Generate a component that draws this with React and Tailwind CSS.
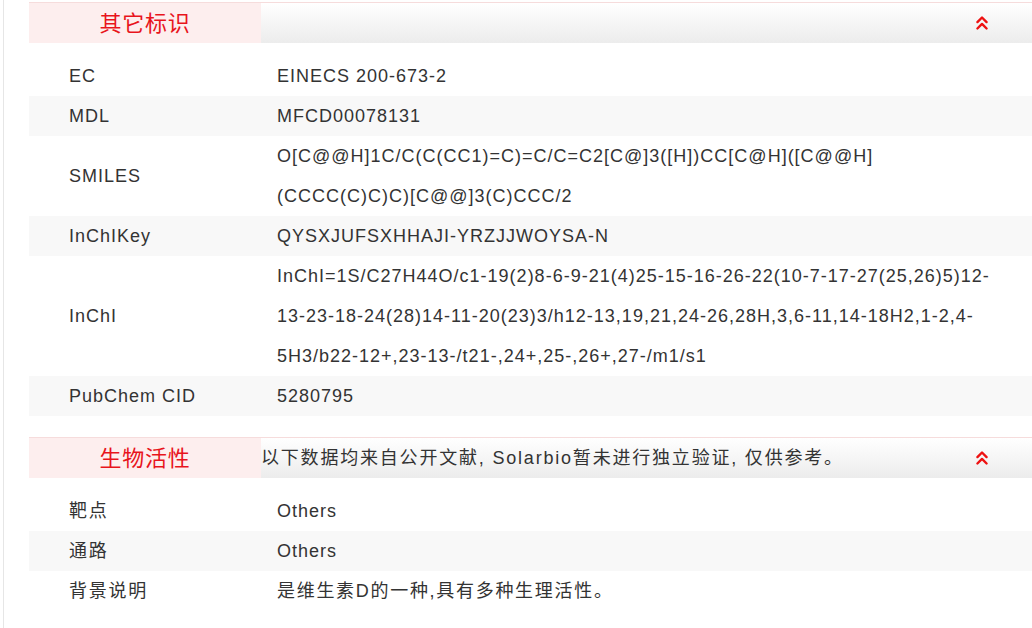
import { ChevronsUp } from 'lucide-react';

const font = { fontFamily: '"Liberation Sans", Arial, "Noto Sans CJK SC", sans-serif' };

const Header = ({ title, note }) => (
  <div className="flex h-[41px] border-t border-[#f6dcdc]">
    <div className="w-[232px] shrink-0 bg-[#fdeeee] flex items-center justify-center text-[22px] tracking-[0.75px] text-[#e8141c]">
      {title}
    </div>
    <div className="flex-1 flex items-center justify-between bg-gradient-to-b from-[#ffffff] to-[#ececec] pr-[39px]">
      <span className="text-[18px] tracking-[1.8px] text-[#333]">{note}</span>
      <ChevronsUp size={22} strokeWidth={2.6} className="text-[#ee1111]" />
    </div>
  </div>
);

const Row = ({ label, value, alt, cjk, cjkValue }) => (
  <div className={`flex ${alt ? 'bg-[#f8f8f8]' : ''}`}>
    <div className={`w-[248px] shrink-0 pl-[40px] flex items-center text-[18px] text-[#333] ${cjk ? 'tracking-[1.75px]' : 'tracking-[1px]'}`}>{label}</div>
    <div className={`w-[716px] text-[18px] leading-[40px] text-[#333] break-words ${cjkValue ? 'tracking-[1.7px]' : 'tracking-[1px]'}`}>{value}</div>
  </div>
);

export default function App() {
  return (
    <div className="min-h-screen bg-white pl-[3px]" style={font}>
      <div className="min-h-[628px] border-l border-[#e6e6e6] pl-[25px] pt-[2px] pb-4">
        <Header title="其它标识" note="" />
        <div className="mt-[13px]">
          <Row label="EC" value="EINECS 200-673-2" />
          <Row label="MDL" value="MFCD00078131" alt />
          <Row label="SMILES" value="O[C@@H]1C/C(C(CC1)=C)=C/C=C2[C@]3([H])CC[C@H]([C@@H](CCCC(C)C)C)[C@@]3(C)CCC/2" />
          <Row label="InChIKey" value="QYSXJUFSXHHAJI-YRZJJWOYSA-N" alt />
          <Row label="InChI" value="InChI=1S/C27H44O/c1-19(2)8-6-9-21(4)25-15-16-26-22(10-7-17-27(25,26)5)12-13-23-18-24(28)14-11-20(23)3/h12-13,19,21,24-26,28H,3,6-11,14-18H2,1-2,4-5H3/b22-12+,23-13-/t21-,24+,25-,26+,27-/m1/s1" />
          <Row label="PubChem CID" value="5280795" alt />
        </div>
        <div className="mt-[21px]">
          <Header title="生物活性" note="以下数据均来自公开文献, Solarbio暂未进行独立验证, 仅供参考。" />
        </div>
        <div className="mt-[13px]">
          <Row label="靶点" value="Others" cjk />
          <Row label="通路" value="Others" alt cjk />
          <Row label="背景说明" value="是维生素D的一种,具有多种生理活性。" cjk cjkValue />
        </div>
      </div>
    </div>
  );
}
